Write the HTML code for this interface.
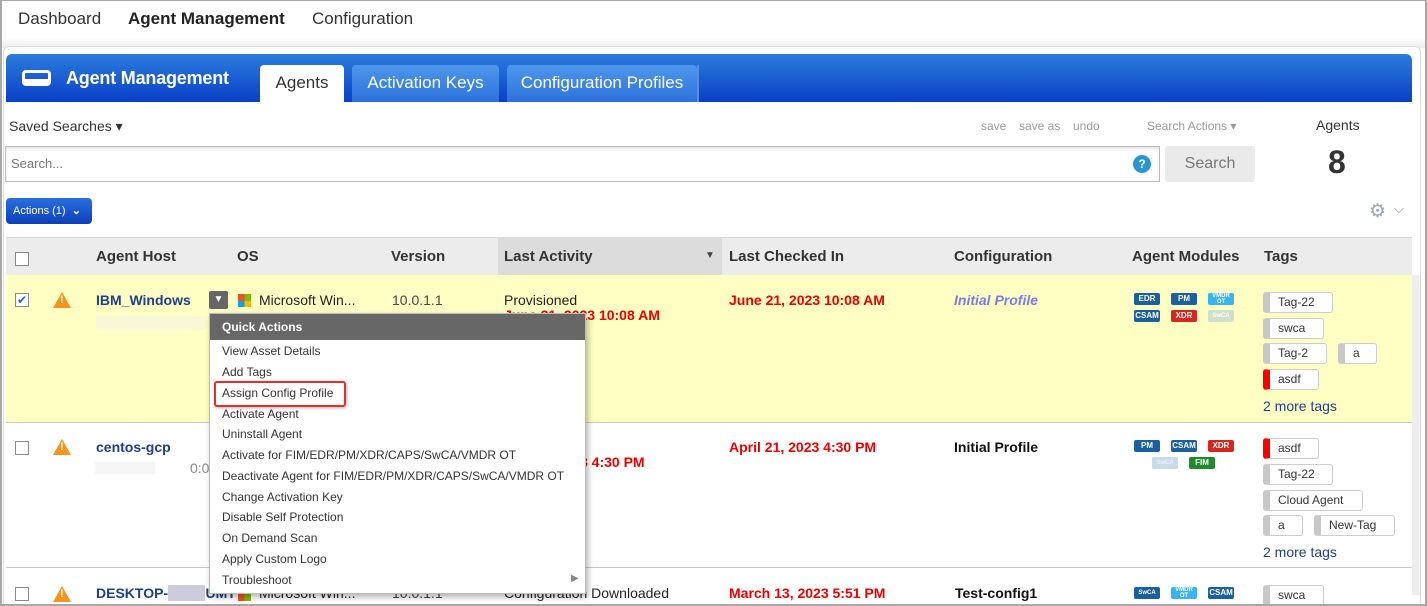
<!DOCTYPE html>
<html><head><meta charset="utf-8"><style>
*{box-sizing:border-box;margin:0;padding:0}
body{width:1427px;height:606px;overflow:hidden;background:#fff;font-family:"Liberation Sans",Arial,sans-serif;position:relative;color:#222}
.a{position:absolute;white-space:nowrap}
.frame{position:absolute;left:0;top:0;width:1427px;height:606px;border:2px solid #a8a8a8;border-top:1px solid #a8a8a8;pointer-events:none;z-index:50}
.b{font-weight:bold}
.tab{position:absolute;top:65px;height:37px;border-radius:4px 4px 0 0;background:linear-gradient(#4f97ec,#2c72dc);color:#fff;font-size:17px;text-align:center;line-height:35px}
.hd{font-size:15px;font-weight:bold;color:#333;top:248px}
.badge{position:absolute;height:12px;border-radius:2px;color:#fff;font-size:8px;font-weight:bold;text-align:center;line-height:12px;width:26px}
.db{background:#1a5f9e}.rd{background:#d7261e}.lb{background:#3ab4f0}.gr{background:#1f8a2c}.fd{background:#c9dbe8;color:#eef}
.tag{position:absolute;height:21px;border:1px solid #ccc;border-left:7px solid #c8c8c8;border-radius:3px;background:#fff;font-size:12px;line-height:19px;padding-left:8px;color:#333}
.tag.r{border-left-color:#f00}
.mi{position:absolute;left:222px;font-size:12px;color:#333;white-space:nowrap}
.cb{position:absolute;left:15px;width:14px;height:14px;border:1px solid #888;background:#fff}
.warn{position:absolute;left:53px;width:0;height:0;border-left:9px solid transparent;border-right:9px solid transparent;border-bottom:16px solid #f7941d}
.warn::after{content:"!";position:absolute;left:-2px;top:2px;color:#fff;font-size:11px;font-weight:bold}
.host{font-size:14px;font-weight:bold;color:#1c3f8a}
.red{color:#e00;font-weight:bold;font-size:14px}
</style></head><body>
<div class="frame"></div>
<div class="a" style="left:18px;top:9px;font-size:17px;color:#333">Dashboard</div>
<div class="a b" style="left:128px;top:9px;font-size:17px;color:#222">Agent Management</div>
<div class="a" style="left:312px;top:9px;font-size:17px;color:#333">Configuration</div>
<div class="a" style="left:2px;top:38px;width:1423px;height:10px;background:linear-gradient(#fff,#ececec)"></div>
<div class="a" style="left:3px;top:46px;width:1418px;height:560px;background:#fff;border-radius:6px 6px 0 0;border:1px solid #ddd"></div>
<div class="a" style="left:6px;top:54px;width:1406px;height:48px;border-radius:6px 6px 0 0;background:linear-gradient(#2c7ddc,#0a3fc8)"></div>
<div class="a" style="left:22px;top:70px;width:29px;height:16px;border:3px solid #fff;border-radius:4px;background:transparent"></div>
<div class="a" style="left:25px;top:79px;width:23px;height:4px;background:#fff"></div>
<div class="a b" style="left:66px;top:68px;font-size:18px;color:#fff;letter-spacing:-.2px">Agent Management</div>
<div class="tab" style="left:260px;width:84px;background:#fff;color:#333">Agents</div>
<div class="tab" style="left:352px;width:147px">Activation Keys</div>
<div class="tab" style="left:507px;width:190px">Configuration Profiles</div>
<div class="a" style="left:697px;top:65px;width:2px;height:37px;background:#5a8ee0"></div>
<div class="a" style="left:9px;top:118px;font-size:14px;color:#333">Saved Searches ▾</div>
<div class="a" style="left:981px;top:119px;font-size:12px;color:#999">save</div>
<div class="a" style="left:1019px;top:119px;font-size:12px;color:#999">save as</div>
<div class="a" style="left:1073px;top:119px;font-size:12px;color:#999">undo</div>
<div class="a" style="left:1147px;top:119px;font-size:12px;color:#999">Search Actions ▾</div>
<div class="a" style="left:1316px;top:117px;font-size:14px;color:#333">Agents</div>
<div class="a b" style="left:1328px;top:144px;font-size:32px;color:#333">8</div>
<div class="a" style="left:5px;top:146px;width:1155px;height:36px;border:1px solid #bbb;box-shadow:inset 0 2px 3px #e4e4e4"></div>
<div class="a" style="left:11px;top:156px;font-size:13px;color:#777">Search...</div>
<div class="a" style="left:1133px;top:155px;width:18px;height:18px;border-radius:50%;background:#2a95d5;color:#fff;font-size:12px;font-weight:bold;text-align:center;line-height:18px">?</div>
<div class="a" style="left:1165px;top:146px;width:90px;height:36px;background:#eaeaea;border-radius:3px;color:#777;font-size:16px;text-align:center;line-height:36px">Search</div>
<div class="a" style="left:6px;top:198px;width:86px;height:26px;border-radius:4px;background:linear-gradient(#2a6fe0,#0c3fb8);color:#fff;font-size:11px;line-height:26px;padding-left:7px">Actions (1) &nbsp;<b>⌄</b></div>
<div class="a" style="left:1369px;top:200px;font-size:19px;color:#9aa6b2">⚙</div>
<div class="a" style="left:1394px;top:201px;font-size:13px;color:#888">⌵</div>
<div class="a" style="left:6px;top:237px;width:1406px;height:38px;background:#ececec;border-top:1px solid #d8d8d8"></div>
<div class="a" style="left:498px;top:237px;width:224px;height:38px;background:#dcdcdc"></div>
<div class="cb" style="top:252px"></div>
<div class="a hd" style="left:96px">Agent Host</div>
<div class="a hd" style="left:237px">OS</div>
<div class="a hd" style="left:391px">Version</div>
<div class="a hd" style="left:504px">Last Activity</div>
<div class="a" style="left:705px;top:250px;font-size:10px;color:#444">▼</div>
<div class="a hd" style="left:729px">Last Checked In</div>
<div class="a hd" style="left:954px">Configuration</div>
<div class="a hd" style="left:1132px">Agent Modules</div>
<div class="a hd" style="left:1264px">Tags</div>
<div class="a" style="left:6px;top:275px;width:1406px;height:147px;background:#ffffc4"></div>
<div class="a" style="left:6px;top:422px;width:1406px;height:1px;background:#c8c8c8"></div>
<div class="a" style="left:6px;top:567px;width:1406px;height:1px;background:#c8c8c8"></div>
<div class="cb" style="top:293px;font-size:12px;line-height:12px;color:#2a5cc8;text-align:center">✔</div>
<div class="warn" style="top:292px"></div>
<div class="a host" style="left:96px;top:292px">IBM_Windows</div>
<div class="a" style="left:96px;top:316px;width:110px;height:14px;background:#f8f8d8"></div>
<div class="a" style="left:209px;top:291px;width:19px;height:18px;background:#666;color:#fff;font-size:10px;text-align:center;line-height:18px;border-radius:2px">▼</div>
<div class="a" style="left:238px;top:294px;width:13px;height:13px;background:linear-gradient(90deg,#f25022 50%,#7fba00 50%)"></div>
<div class="a" style="left:238px;top:301px;width:13px;height:6px;background:linear-gradient(90deg,#00a4ef 50%,#ffb900 50%)"></div>
<div class="a" style="left:259px;top:292px;font-size:14px">Microsoft Win...</div>
<div class="a" style="left:392px;top:292px;font-size:14px;color:#444">10.0.1.1</div>
<div class="a" style="left:504px;top:292px;font-size:14px">Provisioned</div>
<div class="a red" style="left:504px;top:307px">June 21, 2023 10:08 AM</div>
<div class="a red" style="left:729px;top:292px">June 21, 2023 10:08 AM</div>
<div class="a b" style="left:954px;top:292px;font-size:14px;font-style:italic;color:#7b7be8">Initial Profile</div>
<div class="badge db" style="left:1134px;top:293px">EDR</div>
<div class="badge db" style="left:1171px;top:293px">PM</div>
<div class="badge lb" style="left:1208px;top:293px;font-size:6px;line-height:6px">VMDR<br>OT</div>
<div class="badge db" style="left:1134px;top:310px">CSAM</div>
<div class="badge rd" style="left:1171px;top:310px">XDR</div>
<div class="badge" style="left:1208px;top:310px;background:#d0dfc8;font-size:6px">SwCA</div>
<div class="tag" style="left:1263px;top:292px;width:70px">Tag-22</div>
<div class="tag" style="left:1263px;top:318px;width:61px">swca</div>
<div class="tag" style="left:1263px;top:343px;width:64px">Tag-2</div>
<div class="tag" style="left:1338px;top:343px;width:39px">a</div>
<div class="tag r" style="left:1263px;top:369px;width:56px">asdf</div>
<div class="a" style="left:1263px;top:398px;font-size:14px;color:#1c3f8a">2 more tags</div>
<div class="cb" style="top:441px"></div>
<div class="warn" style="top:439px"></div>
<div class="a host" style="left:96px;top:439px">centos-gcp</div>
<div class="a" style="left:95px;top:462px;width:60px;height:12px;background:#f6f6f6"></div>
<div class="a" style="left:190px;top:460px;font-size:14px;color:#888">0:0</div>
<div class="a red" style="left:580px;top:454px">3 4:30 PM</div>
<div class="a red" style="left:729px;top:439px">April 21, 2023 4:30 PM</div>
<div class="a b" style="left:954px;top:439px;font-size:14px;color:#111">Initial Profile</div>
<div class="badge db" style="left:1134px;top:440px">PM</div>
<div class="badge db" style="left:1171px;top:440px">CSAM</div>
<div class="badge rd" style="left:1208px;top:440px">XDR</div>
<div class="badge fd" style="left:1152px;top:457px;font-size:6px">SwCA</div>
<div class="badge gr" style="left:1189px;top:457px">FIM</div>
<div class="tag r" style="left:1263px;top:438px;width:56px">asdf</div>
<div class="tag" style="left:1263px;top:464px;width:70px">Tag-22</div>
<div class="tag" style="left:1263px;top:490px;width:100px">Cloud Agent</div>
<div class="tag" style="left:1263px;top:515px;width:40px">a</div>
<div class="tag" style="left:1314px;top:515px;width:81px">New-Tag</div>
<div class="a" style="left:1263px;top:544px;font-size:14px;color:#1c3f8a">2 more tags</div>
<div class="cb" style="top:587px"></div>
<div class="warn" style="top:586px"></div>
<div class="a host" style="left:96px;top:585px">DESKTOP-<span style="background:#ccccdd;color:#ccccdd">XXXX</span>UMT</div>
<div class="a" style="left:238px;top:588px;width:13px;height:13px;background:linear-gradient(90deg,#f25022 50%,#7fba00 50%)"></div>
<div class="a" style="left:259px;top:585px;font-size:14px">Microsoft Win...</div>
<div class="a" style="left:392px;top:585px;font-size:14px;color:#444">10.0.1.1</div>
<div class="a" style="left:504px;top:585px;font-size:14px">Configuration Downloaded</div>
<div class="a red" style="left:729px;top:585px">March 13, 2023 5:51 PM</div>
<div class="a b" style="left:955px;top:585px;font-size:14px;color:#111">Test-config1</div>
<div class="badge db" style="left:1134px;top:587px;font-size:6px">SwCA</div>
<div class="badge lb" style="left:1171px;top:587px;font-size:6px;line-height:6px">VMDR<br>OT</div>
<div class="badge db" style="left:1208px;top:587px">CSAM</div>
<div class="tag" style="left:1263px;top:585px;width:61px">swca</div>
<div class="a" style="left:1412px;top:275px;width:8px;height:320px;background:#eee"></div>
<div class="a" style="left:209px;top:313px;width:377px;height:281px;background:#fff;border:1px solid #bbb;box-shadow:2px 3px 6px rgba(0,0,0,.3);z-index:10">
 <div style="height:26px;background:#676767;color:#fff;font-size:12px;font-weight:bold;line-height:26px;padding-left:12px">Quick Actions</div>
</div>
<div style="position:absolute;z-index:11;left:0;top:0;width:1427px;height:606px">
<div class="mi" style="top:344px">View Asset Details</div>
<div class="mi" style="top:365px">Add Tags</div>
<div class="a" style="left:214px;top:381px;width:132px;height:26px;border:2px solid #e03030;border-radius:3px;box-shadow:1px 1px 3px rgba(0,0,0,.3)"></div>
<div class="mi" style="top:386px">Assign Config Profile</div>
<div class="mi" style="top:407px">Activate Agent</div>
<div class="mi" style="top:427px">Uninstall Agent</div>
<div class="mi" style="top:448px">Activate for FIM/EDR/PM/XDR/CAPS/SwCA/VMDR OT</div>
<div class="mi" style="top:469px">Deactivate Agent for FIM/EDR/PM/XDR/CAPS/SwCA/VMDR OT</div>
<div class="mi" style="top:490px">Change Activation Key</div>
<div class="mi" style="top:510px">Disable Self Protection</div>
<div class="mi" style="top:531px">On Demand Scan</div>
<div class="mi" style="top:552px">Apply Custom Logo</div>
<div class="mi" style="top:573px">Troubleshoot</div>
<div class="a" style="left:571px;top:573px;font-size:10px;color:#888">▶</div>
</div>
</body></html>
